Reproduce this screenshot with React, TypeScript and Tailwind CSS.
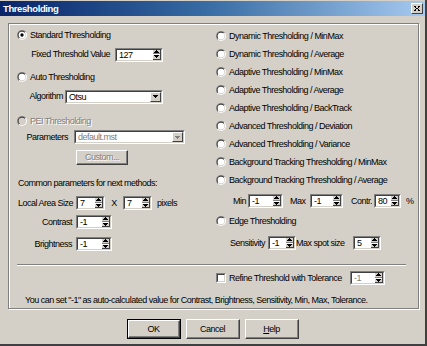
import React from "react";

const font = "font-['Liberation_Sans',Arial,sans-serif]";
const dis = "text-[#808080] [text-shadow:1px_1px_0_#fff]";

function Tri({ dir, color = "#000" }: { dir: "up" | "down"; color?: string }) {
  const d =
    dir === "up"
      ? "M2 0h1v1h-1z M1 1h3v1h-3z M0 2h5v1h-5z"
      : "M0 0h5v1h-5z M1 1h3v1h-3z M2 2h1v1h-1z";
  return (
    <svg width="5" height="3" viewBox="0 0 5 3" className="block">
      <path d={d} fill={color} />
    </svg>
  );
}

function Sunken({
  className = "",
  bg = "bg-white",
  children,
}: {
  className?: string;
  bg?: string;
  children?: React.ReactNode;
}) {
  return (
    <div className={`flex border border-t-[#808080] border-l-[#808080] border-r-white border-b-white ${className}`}>
      <div className={`flex flex-1 min-w-0 border border-t-[#404040] border-l-[#404040] border-r-[#d4d0c8] border-b-[#d4d0c8] ${bg}`}>
        {children}
      </div>
    </div>
  );
}

function Spin({ className, value, disabled }: { className: string; value: string; disabled?: boolean }) {
  return (
    <Sunken className={`h-[14px] ${className}`}>
      <span className={`flex-1 pl-[2px] leading-[10px] ${disabled ? "text-[#808080]" : ""}`}>{value}</span>
      <div className="flex flex-col w-[9px] bg-[#d4d0c8] border-l border-l-white border-r border-r-[#404040]">
        <div className="flex-1 flex items-center justify-center border-b border-b-[#808080]">
          <Tri dir="up" />
        </div>
        <div className="flex-1 flex items-center justify-center border-t border-t-white border-b border-b-[#404040]">
          <Tri dir="down" />
        </div>
      </div>
    </Sunken>
  );
}

function Combo({ className, value, disabled }: { className: string; value: string; disabled?: boolean }) {
  return (
    <Sunken className={`h-[14px] ${className}`}>
      <span className={`flex-1 pl-[2px] leading-[10px] ${disabled ? "text-[#808080]" : ""}`}>{value}</span>
      <div className="w-[11px] flex items-center justify-center bg-[#d4d0c8] border border-t-white border-l-white border-r-[#404040] border-b-[#404040]">
        <Tri dir="down" color={disabled ? "#808080" : "#000"} />
      </div>
    </Sunken>
  );
}

function RadioIcon({ checked, disabled }: { checked?: boolean; disabled?: boolean }) {
  return (
    <svg width="10" height="10" viewBox="0 0 12 12" className="block shrink-0">
      <defs>
        <linearGradient id="ro" x1="0" y1="0" x2="1" y2="1">
          <stop offset="0.5" stopColor="#808080" />
          <stop offset="0.5" stopColor="#ffffff" />
        </linearGradient>
        <linearGradient id="ri" x1="0" y1="0" x2="1" y2="1">
          <stop offset="0.5" stopColor="#404040" />
          <stop offset="0.5" stopColor="#d4d0c8" />
        </linearGradient>
      </defs>
      <circle cx="6" cy="6" r="6" fill="url(#ro)" />
      <circle cx="6" cy="6" r="5" fill="url(#ri)" />
      <circle cx="6" cy="6" r="4" fill={disabled ? "#d4d0c8" : "#fff"} />
      {checked && <circle cx="6" cy="6" r="2" fill="#000" />}
    </svg>
  );
}

function Radio({ label, checked, disabled, h = "h-[14px]" }: { label: string; checked?: boolean; disabled?: boolean; h?: string }) {
  return (
    <div className={`flex items-center gap-[3px] ${h}`}>
      <RadioIcon checked={checked} disabled={disabled} />
      <span className={`leading-none whitespace-nowrap ${disabled ? dis : ""}`}>{label}</span>
    </div>
  );
}

function Button({ label, def, disabled }: { label: React.ReactNode; def?: boolean; disabled?: boolean }) {
  const inner = (
    <div className="flex-1 flex items-center justify-center bg-[#d4d0c8] border border-t-white border-l-white border-r-[#404040] border-b-[#404040] shadow-[inset_-1px_-1px_0_#808080]">
      <span className={`leading-none ${disabled ? dis : ""}`}>{label}</span>
    </div>
  );
  return def ? <div className="flex w-[54px] h-[20px] border border-black">{inner}</div> : <div className="flex w-[54px] h-[20px]">{inner}</div>;
}

export default function App() {
  const rightRadios = [
    "Dynamic Thresholding / MinMax",
    "Dynamic Thresholding / Average",
    "Adaptive Thresholding / MinMax",
    "Adaptive Thresholding / Average",
    "Adaptive Thresholding / BackTrack",
    "Advanced Thresholding / Deviation",
    "Advanced Thresholding / Variance",
    "Background Tracking Thresholding / MinMax",
    "Background Tracking Thresholding / Average",
  ];

  return (
    <div className={`w-[427px] h-[346px] overflow-hidden bg-[#d4d0c8] pt-[1px] flex flex-col text-[9px] tracking-[-0.5px] text-black ${font} border-r-2 border-b-2 border-r-[#404040] border-b-[#404040]`}>
      {/* title bar */}
      <div className="h-[15px] shrink-0 flex items-center justify-between pl-[3px] pr-[2px] bg-linear-to-r from-[#0a246a] via-[#3a6ea5] to-[#a6caf0]">
        <span className="text-white font-bold text-[9.5px] tracking-[-0.4px] leading-none">Thresholding</span>
        <div className="w-[12px] h-[11px] flex items-center justify-center bg-[#d4d0c8] border border-t-white border-l-white border-r-[#404040] border-b-[#404040]">
          <svg width="6" height="5" viewBox="0 0 6 5" className="block">
            <path d="M0 0h2v1h-2z M4 0h2v1h-2z M1 1h1v1h-1z M4 1h1v1h-1z M2 2h2v1h-2z M1 3h1v1h-1z M4 3h1v1h-1z M0 4h2v1h-2z M4 4h2v1h-2z" fill="#000" />
          </svg>
        </div>
      </div>

      {/* group box */}
      <div className="mt-[7px] ml-[8px] w-[411px] h-[286px] shrink-0 border border-[#808080] shadow-[inset_1px_1px_0_#fff,1px_1px_0_#fff] flex flex-col">
        <div className="grid grid-cols-[207px_1fr]">
          {/* left column */}
          <div className="flex flex-col pl-[8px] pt-[4px]">
            <Radio label="Standard Thresholding" checked />
            <div className="mt-[5px] h-[15px] flex items-center">
              <div className="w-[98px] text-right pr-[5px] leading-none whitespace-nowrap">Fixed Threshold Value</div>
              <Spin className="w-[48px]" value="127" />
            </div>
            <div className="mt-[8px]">
              <Radio label="Auto Thresholding" />
            </div>
            <div className="mt-[5px] h-[15px] flex items-center">
              <div className="w-[48px] text-right pr-[2px] leading-none">Algorithm</div>
              <Combo className="w-[98px]" value="Otsu" />
            </div>
            <div className="mt-[10px]">
              <Radio label="PEI Thresholding" disabled />
            </div>
            <div className="mt-[2px] h-[14px] flex items-center">
              <div className="w-[57px] text-right pr-[6px] leading-none">Parameters</div>
              <Combo className="w-[111px]" value="default.mst" disabled />
            </div>
            <div className="mt-[6px] h-[15px] flex ml-[59px]">
              <div className="flex w-[52px]">
                <div className="flex-1 flex items-center justify-center bg-[#d4d0c8] border border-t-white border-l-white border-r-[#404040] border-b-[#404040] shadow-[inset_-1px_-1px_0_#808080]">
                  <span className={`leading-none ${dis}`}>Custom...</span>
                </div>
              </div>
            </div>
            <div className="mt-[11px] h-[14px] flex items-center pl-[1px] leading-none whitespace-nowrap">
              Common parameters for next methods:
            </div>
            <div className="mt-[6px] h-[14px] flex items-center">
              <div className="w-[59px] pl-[1px] leading-none whitespace-nowrap">Local Area Size</div>
              <Spin className="w-[29px]" value="7" />
              <div className="w-[18px] text-center leading-none">X</div>
              <Spin className="w-[29px]" value="7" />
              <div className="pl-[5px] leading-none">pixels</div>
            </div>
            <div className="mt-[5px] h-[14px] flex items-center">
              <div className="w-[59px] text-right pr-[4px] leading-none">Contrast</div>
              <Spin className="w-[36px]" value="-1" />
            </div>
            <div className="mt-[8px] h-[14px] flex items-center">
              <div className="w-[59px] text-right pr-[4px] leading-none">Brightness</div>
              <Spin className="w-[36px]" value="-1" />
            </div>
          </div>

          {/* right column */}
          <div className="flex flex-col pt-[3px]">
            {rightRadios.map((r) => (
              <Radio key={r} label={r} h="h-[18px]" />
            ))}
            <div className="mt-[5px] h-[14px] flex items-center">
              <div className="w-[32px] pl-[17px] leading-none">Min</div>
              <Spin className="w-[35px]" value="-1" />
              <div className="w-[27px] pl-[7px] leading-none">Max</div>
              <Spin className="w-[33px]" value="-1" />
              <div className="w-[31px] pl-[8px] leading-none whitespace-nowrap">Contr.</div>
              <Spin className="w-[27px]" value="80" />
              <div className="pl-[5px] leading-none">%</div>
            </div>
            <div className="mt-[6px]">
              <Radio label="Edge Thresholding" />
            </div>
            <div className="mt-[8px] h-[14px] flex items-center">
              <div className="w-[52px] text-right pr-[3px] leading-none">Sensitivity</div>
              <Spin className="w-[28px]" value="-1" />
              <div className="w-[57px] text-right pr-[10px] leading-none whitespace-nowrap">Max spot size</div>
              <Spin className="w-[28px]" value="5" />
            </div>
          </div>
        </div>

        {/* separator */}
        <div className="mt-[13px] ml-[8px] w-[389px] h-[2px] border-t border-t-[#808080] border-b border-b-white" />

        {/* refine */}
        <div className="mt-[5px] ml-[207px] h-[14px] flex items-center">
          <div className="w-[134px] flex items-center gap-[3px]">
            <Sunken className="w-[10px] h-[10px] shrink-0" />
            <span className="leading-none whitespace-nowrap">Refine Threshold with Tolerance</span>
          </div>
          <Spin className="w-[35px]" value="-1" disabled />
        </div>

        <div className="mt-[8px] h-[14px] flex items-center pl-[16px] leading-none whitespace-nowrap">
          You can set "-1" as auto-calculated value for Contrast, Brightness, Sensitivity, Min, Max, Tolerance.
        </div>
      </div>

      {/* buttons */}
      <div className="mt-[10px] flex justify-center gap-[5px]">
        <Button label="OK" def />
        <Button label="Cancel" />
        <Button
          label={
            <>
              <span className="underline">H</span>elp
            </>
          }
        />
      </div>
    </div>
  );
}
